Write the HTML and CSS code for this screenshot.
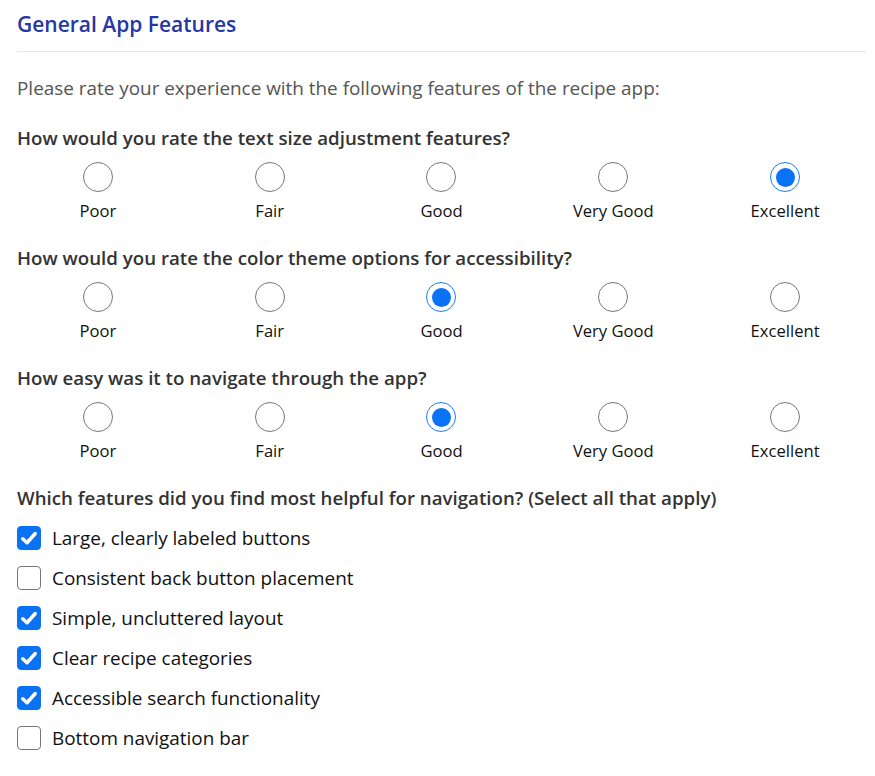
FILE: index.html
```html
<!DOCTYPE html>
<html>
<head>
<meta charset="utf-8">
<link rel="stylesheet" href="styles.css">
</head>
<body>
<section class="card">
  <h2 class="title">General App Features</h2>
  <p class="intro">Please rate your experience with the following features of the recipe app:</p>

  <div class="question">
    <p class="q-label">How would you rate the text size adjustment features?</p>
    <div class="scale">
      <label class="opt"><span class="radio"></span><span class="opt-text">Poor</span></label>
      <label class="opt"><span class="radio"></span><span class="opt-text">Fair</span></label>
      <label class="opt"><span class="radio"></span><span class="opt-text">Good</span></label>
      <label class="opt"><span class="radio"></span><span class="opt-text">Very Good</span></label>
      <label class="opt"><span class="radio checked"></span><span class="opt-text">Excellent</span></label>
    </div>
  </div>

  <div class="question">
    <p class="q-label">How would you rate the color theme options for accessibility?</p>
    <div class="scale">
      <label class="opt"><span class="radio"></span><span class="opt-text">Poor</span></label>
      <label class="opt"><span class="radio"></span><span class="opt-text">Fair</span></label>
      <label class="opt"><span class="radio checked"></span><span class="opt-text">Good</span></label>
      <label class="opt"><span class="radio"></span><span class="opt-text">Very Good</span></label>
      <label class="opt"><span class="radio"></span><span class="opt-text">Excellent</span></label>
    </div>
  </div>

  <div class="question">
    <p class="q-label">How easy was it to navigate through the app?</p>
    <div class="scale">
      <label class="opt"><span class="radio"></span><span class="opt-text">Poor</span></label>
      <label class="opt"><span class="radio"></span><span class="opt-text">Fair</span></label>
      <label class="opt"><span class="radio checked"></span><span class="opt-text">Good</span></label>
      <label class="opt"><span class="radio"></span><span class="opt-text">Very Good</span></label>
      <label class="opt"><span class="radio"></span><span class="opt-text">Excellent</span></label>
    </div>
  </div>

  <div class="question last">
    <p class="q-label">Which features did you find most helpful for navigation? (Select all that apply)</p>
    <div class="checks">
      <label class="check-row"><span class="box checked"><svg viewBox="0 0 16 16" width="20" height="20"><path d="M3 8.6 L6.4 11.8 L13 4.4" fill="none" stroke="#fff" stroke-width="2.8" stroke-linecap="round" stroke-linejoin="round"/></svg></span><span class="check-text">Large, clearly labeled buttons</span></label>
      <label class="check-row"><span class="box"></span><span class="check-text">Consistent back button placement</span></label>
      <label class="check-row"><span class="box checked"><svg viewBox="0 0 16 16" width="20" height="20"><path d="M3 8.6 L6.4 11.8 L13 4.4" fill="none" stroke="#fff" stroke-width="2.8" stroke-linecap="round" stroke-linejoin="round"/></svg></span><span class="check-text">Simple, uncluttered layout</span></label>
      <label class="check-row"><span class="box checked"><svg viewBox="0 0 16 16" width="20" height="20"><path d="M3 8.6 L6.4 11.8 L13 4.4" fill="none" stroke="#fff" stroke-width="2.8" stroke-linecap="round" stroke-linejoin="round"/></svg></span><span class="check-text">Clear recipe categories</span></label>
      <label class="check-row"><span class="box checked"><svg viewBox="0 0 16 16" width="20" height="20"><path d="M3 8.6 L6.4 11.8 L13 4.4" fill="none" stroke="#fff" stroke-width="2.8" stroke-linecap="round" stroke-linejoin="round"/></svg></span><span class="check-text">Accessible search functionality</span></label>
      <label class="check-row"><span class="box"></span><span class="check-text">Bottom navigation bar</span></label>
    </div>
  </div>
</section>
</body>
</html>
```

FILE: styles.css
```css
* { box-sizing: border-box; }
body {
  margin: 0;
  background: #fff;
  font-family: "Open Sans", "Noto Sans", sans-serif;
  color: #222;
}
.card {
  padding: 10px 9px 0 17px;
}
.title {
  margin: 0;
  font-size: 21px;
  line-height: 28px;
  font-weight: 600;
  color: #2536a6;
  padding-bottom: 13px;
  border-bottom: 1px solid #e6e6e6;
}
.intro {
  margin: 23px 0 0;
  font-size: 18.9px;
  line-height: 26px;
  color: #555;
}
.question {
  margin-top: 24px;
}
.question + .question {
  margin-top: 22px;
}
.q-label {
  margin: 0;
  font-size: 18.7px;
  line-height: 26px;
  font-weight: 600;
  color: #333;
}
.scale {
  display: grid;
  grid-template-columns: repeat(5, 1fr);
  margin: 11px -5px 0 -5px;
}
.opt {
  display: flex;
  flex-direction: column;
  align-items: center;
  gap: 7px;
}
.radio {
  width: 30px;
  height: 30px;
  border-radius: 50%;
  border: 1.5px solid #767676;
  background: #fff;
  display: flex;
  align-items: center;
  justify-content: center;
}
.radio.checked {
  border: 1.5px solid #1a7bff;
}
.radio.checked::after {
  content: "";
  width: 19px;
  height: 19px;
  border-radius: 50%;
  background: #0a72f5;
}
.opt-text {
  font-size: 16.6px;
  line-height: 24px;
  color: #111;
}
.checks {
  margin-top: 15px;
  display: flex;
  flex-direction: column;
  gap: 16px;
}
.check-row {
  display: flex;
  align-items: center;
  gap: 11px;
  height: 24px;
}
.box {
  width: 24px;
  height: 24px;
  border-radius: 4px;
  border: 1.5px solid #767676;
  background: #fff;
  display: flex;
  align-items: center;
  justify-content: center;
  flex: none;
}
.box.checked {
  background: #0a72f5;
  border-color: #0a72f5;
}
.check-text {
  font-size: 18.9px;
  line-height: 24px;
  color: #111;
}
```
